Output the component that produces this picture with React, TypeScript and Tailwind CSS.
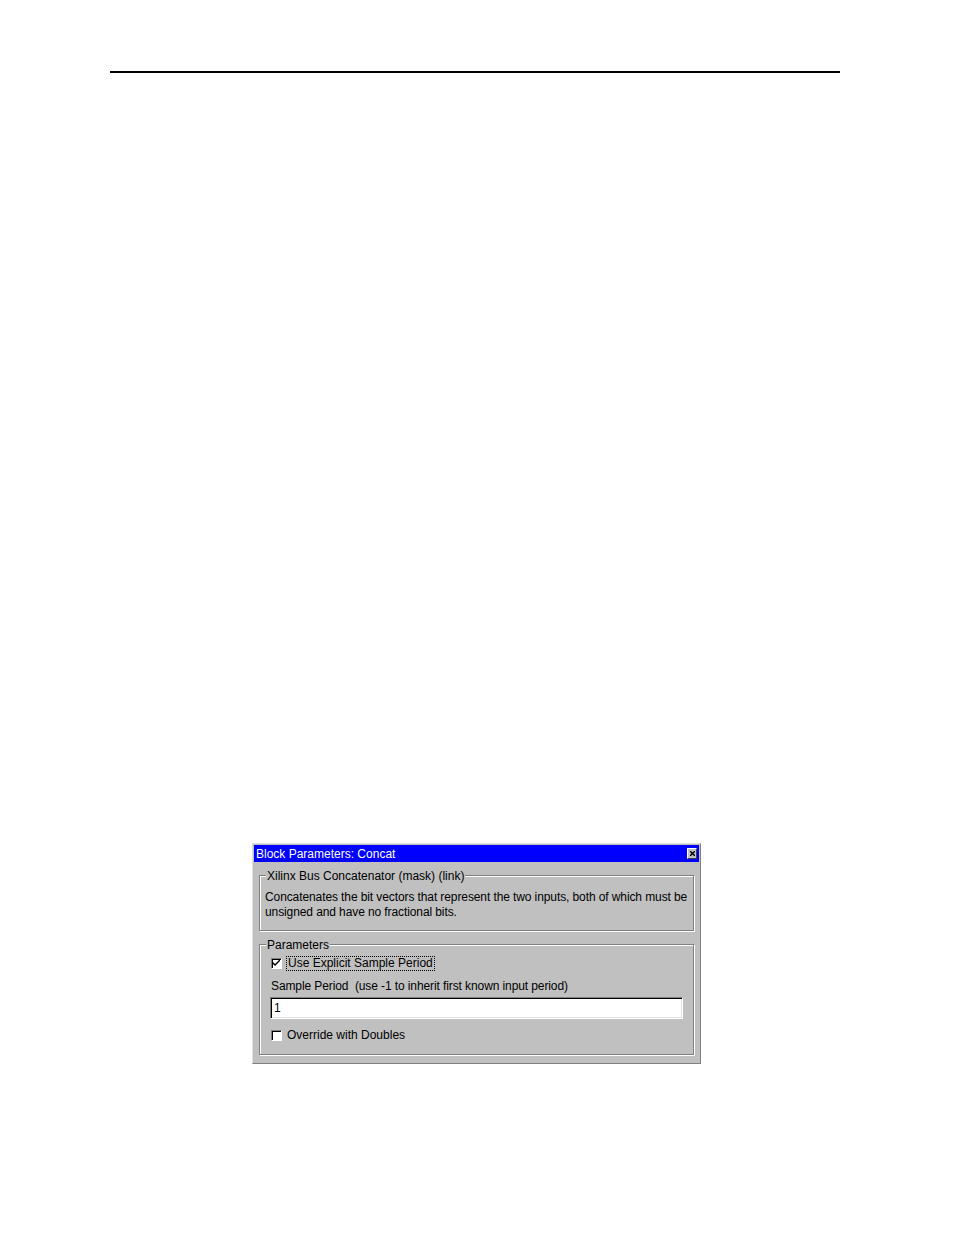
import React from "react";

const font = { fontFamily: '"Liberation Sans", Arial, sans-serif' };

function CheckBox({ checked }: { checked: boolean }) {
  return (
    <span className="inline-flex h-[11px] w-[11px] shrink-0 items-center justify-center border-t border-l border-t-[#808080] border-l-[#808080] border-r border-b border-r-white border-b-white bg-white shadow-[inset_1px_1px_0_#000]">
      {checked && (
        <svg width="7" height="7" viewBox="0 0 7 7">
          <path d="M0 2 L0 4 L2 6 L7 1 L7 -1 L2 4 Z" fill="#000" />
        </svg>
      )}
    </span>
  );
}

function GroupBox({ title, className, children }: { title: string; className?: string; children: React.ReactNode }) {
  return (
    <div className={`relative border border-[#808080] shadow-[inset_1px_1px_0_#fff,1px_1px_0_#fff] ${className ?? ""}`}>
      <span className="absolute -top-[7px] left-[6px] bg-[#c0c0c0] px-[1px] text-[12px] leading-[14px] text-black">
        {title}
      </span>
      {children}
    </div>
  );
}

export default function App() {
  return (
    <div className="min-h-[1235px] w-[954px] bg-white pt-[71px]" style={font}>
      <div className="ml-[110px] mr-[114px] h-[2px] bg-black" />

      <div className="ml-[252px] mt-[770px] w-[449px] border-t border-l border-t-[#dfdfdf] border-l-[#dfdfdf] border-r border-b border-r-[#808080] border-b-[#808080] bg-[#c0c0c0] p-[1px]">
        {/* title bar */}
        <div className="flex h-[17px] items-center justify-between bg-[#0000ff] pl-[2px] pr-[2px]">
          <span className="text-[12px] leading-[14px] text-white">Block Parameters: Concat</span>
          <span className="flex h-[11px] w-[10px] items-center justify-center border-t border-l border-t-white border-l-white border-r border-b border-r-[#404040] border-b-[#404040] bg-[#c0c0c0]">
            <svg width="5" height="5" viewBox="0 0 5 5">
              <path d="M0 0 L5 5 M5 0 L0 5" stroke="#000" strokeWidth="1.4" />
            </svg>
          </span>
        </div>

        {/* body */}
        <div className="px-[5px] pt-[13px] pb-[7px]">
          <GroupBox title="Xilinx Bus Concatenator (mask) (link)" className="pt-[14px] pb-[10px] pl-[5px] pr-[4px]">
            <p className="text-[12px] leading-[15px] tracking-[-0.1px] text-black">
              Concatenates the bit vectors that represent the two inputs, both of which must be
              <br />
              unsigned and have no fractional bits.
            </p>
          </GroupBox>

          <GroupBox title="Parameters" className="mt-[13px] pl-[11px] pr-[10px] pt-[11px] pb-[12px]">
            <div className="flex items-center gap-[4px]">
              <CheckBox checked />
              <span className="border border-dotted border-black px-[1px] text-[12px] leading-[13px] text-black">
                Use Explicit Sample Period
              </span>
            </div>
            <div className="mt-[8px] whitespace-pre text-[12px] leading-[14px] tracking-[-0.1px] text-black">
              {"Sample Period  (use -1 to inherit first known input period)"}
            </div>
            <div className="-ml-[1px] mt-[4px] h-[22px] border-t border-l border-t-[#808080] border-l-[#808080] border-r border-b border-r-white border-b-white bg-white shadow-[inset_1px_1px_0_#000,inset_-1px_-1px_0_#dfdfdf]">
              <span className="block pl-[3px] pt-[3px] text-[12px] leading-[14px] text-black">1</span>
            </div>
            <div className="mt-[9px] flex items-center gap-[5px]">
              <CheckBox checked={false} />
              <span className="text-[12px] leading-[14px] text-black">Override with Doubles</span>
            </div>
          </GroupBox>
        </div>
      </div>
    </div>
  );
}
